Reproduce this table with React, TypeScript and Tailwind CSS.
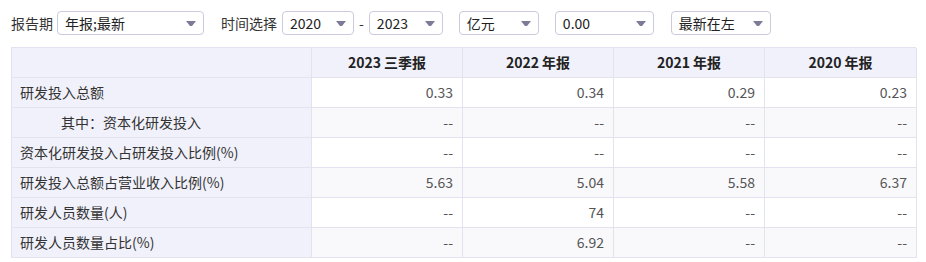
import React from "react";

const font = { fontFamily: '"Noto Sans CJK SC", "Noto Sans", sans-serif' };

function Arrow() {
  return (
    <svg width="10" height="5" viewBox="0 0 10 5" className="shrink-0">
      <path d="M0 0 H10 L6 5 H4 Z" fill="#7b7b98" />
    </svg>
  );
}

function Select({ value, w }: { value: string; w: string }) {
  return (
    <div
      className={`${w} h-[24px] border border-[#cbcbdf] rounded-[4px] bg-white flex items-center justify-between pl-[7px] pr-[7px] text-[14px] text-[#222]`}
    >
      <span className="leading-none">{value}</span>
      <Arrow />
    </div>
  );
}

function SelectNoArrow({ value, w }: { value: string; w: string }) {
  return (
    <div
      className={`${w} h-[24px] border border-[#cbcbdf] rounded-[4px] bg-white flex items-center justify-between pl-[7px] pr-[7px] text-[14px] text-[#222]`}
    >
      <span className="leading-none">{value}</span>
      <Arrow />
    </div>
  );
}

const headers = ["2023 三季报", "2022 年报", "2021 年报", "2020 年报"];
const rows: { label: string; indent?: boolean; values: string[] }[] = [
  { label: "研发投入总额", values: ["0.33", "0.34", "0.29", "0.23"] },
  { label: "其中：资本化研发投入", indent: true, values: ["--", "--", "--", "--"] },
  { label: "资本化研发投入占研发投入比例(%)", values: ["--", "--", "--", "--"] },
  { label: "研发投入总额占营业收入比例(%)", values: ["5.63", "5.04", "5.58", "6.37"] },
  { label: "研发人员数量(人)", values: ["--", "74", "--", "--"] },
  { label: "研发人员数量占比(%)", values: ["--", "6.92", "--", "--"] },
];

export default function App() {
  return (
    <div className="w-[926px] h-[262px] bg-white pt-[11px] px-[11px]" style={font}>
      <div className="flex items-center h-[24px] text-[14px] text-[#333]">
        <span>报告期</span>
        <div className="ml-[4px]">
          <Select value="年报;最新" w="w-[147px]" />
        </div>
        <span className="ml-[17px]">时间选择</span>
        <div className="ml-[5px]">
          <Select value="2020" w="w-[72px]" />
        </div>
        <span className="mx-[5px]">-</span>
        <Select value="2023" w="w-[74px]" />
        <div className="ml-[16px]">
          <Select value="亿元" w="w-[80px]" />
        </div>
        <div className="ml-[16px]">
          <SelectNoArrow value="0.00" w="w-[99px]" />
        </div>
        <div className="ml-[17px]">
          <Select value="最新在左" w="w-[100px]" />
        </div>
      </div>

      <div className="mt-[12px] w-[905px] grid grid-cols-[300px_151px_151px_151px_152px] border-l border-t border-[#e3e3ef] text-[14px]">
        <div className="h-[30px] bg-[#f0f1fa] border-r border-b border-[#e3e3ef]" />
        {headers.map((h) => (
          <div
            key={h}
            className="h-[30px] bg-[#f0f1fa] border-r border-b border-[#e3e3ef] flex items-center justify-center font-bold text-[#222]"
          >
            {h}
          </div>
        ))}
        {rows.map((r, i) => (
          <React.Fragment key={r.label}>
            <div
              className={`h-[30px] bg-[#f0f1fa] border-r border-b border-[#e3e3ef] flex items-center text-[#333] ${
                r.indent ? "pl-[49px]" : "pl-[8px]"
              }`}
            >
              {r.label}
            </div>
            {r.values.map((v, j) => (
              <div
                key={j}
                className={`h-[30px] border-r border-b border-[#e3e3ef] flex items-center justify-end pr-[9px] text-[#555] ${
                  i % 2 === 1 ? "bg-[#f9f9fc]" : "bg-white"
                }`}
              >
                {v}
              </div>
            ))}
          </React.Fragment>
        ))}
      </div>
    </div>
  );
}
